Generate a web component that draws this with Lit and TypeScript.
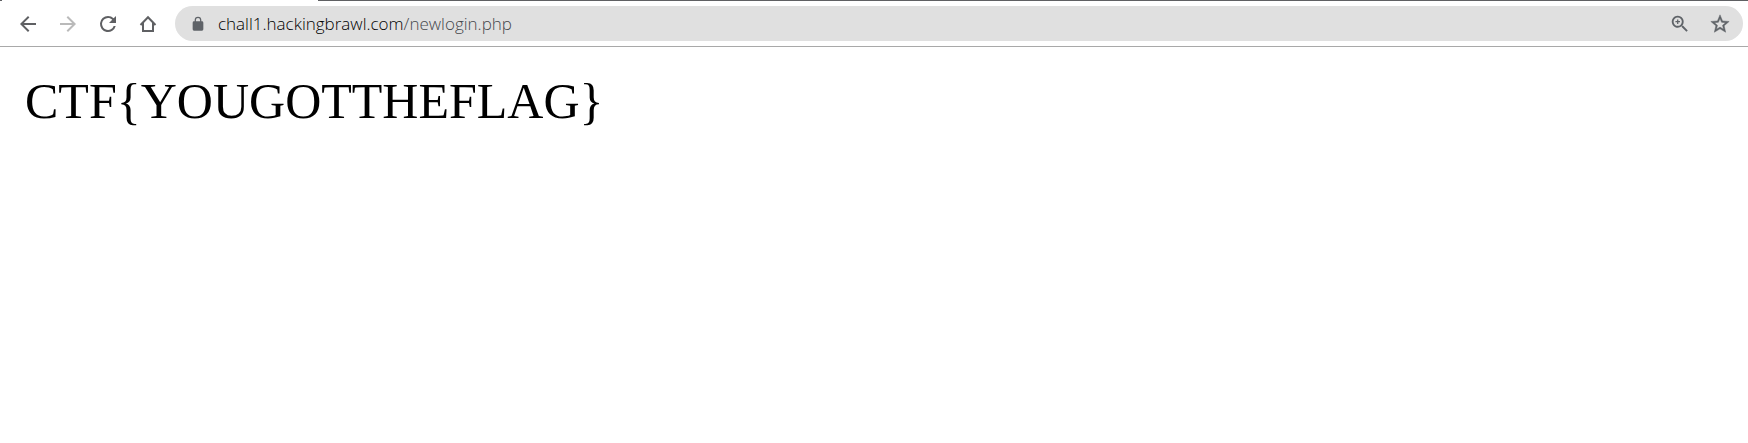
import { LitElement, html, css, svg } from "lit";
import { customElement, property } from "lit/decorators.js";

const icons = {
  back: svg`<path d="M20 11H7.83l5.59-5.59L12 4l-8 8 8 8 1.41-1.41L7.83 13H20v-2z"/>`,
  forward: svg`<path d="M4 11h12.17l-5.59-5.59L12 4l8 8-8 8-1.41-1.41L16.17 13H4v-2z"/>`,
  reload: svg`<path d="M17.65 6.35A7.96 7.96 0 0 0 12 4a8 8 0 1 0 7.73 10h-2.08A6 6 0 1 1 12 6c1.66 0 3.14.69 4.22 1.78L13 11h7V4l-2.35 2.35z"/>`,
  home: svg`<path fill="none" stroke="currentColor" stroke-width="2" stroke-linejoin="miter" d="M4.500 13 12 5.300l7.500 7.700M7 11v8h10v-8"/>`,
  lock: svg`<path d="M18 8h-1V6A5 5 0 0 0 7 6v2H6a2 2 0 0 0-2 2v10a2 2 0 0 0 2 2h12a2 2 0 0 0 2-2V10a2 2 0 0 0-2-2zM8.900 8V6a3.100 3.100 0 0 1 6.200 0v2z"/>`,
  zoom: svg`<path d="M15.500 14h-.79l-.28-.27A6.500 6.500 0 1 0 13.730 14.430l.27.28v.79l5 4.990L20.490 19l-4.990-5zm-6 0a4.500 4.500 0 1 1 0-9 4.500 4.500 0 0 1 0 9zM10.200 7H8.800v1.800H7v1.400h1.800V12h1.400v-1.800H12V8.800h-1.800z"/>`,
  star: svg`<path stroke="currentColor" stroke-width=".5" d="m22 9.240-7.190-.62L12 2 9.190 8.630 2 9.240l5.460 4.730L5.820 21 12 17.270 18.180 21l-1.630-7.030L22 9.240zM12 15.400l-3.760 2.270 1-4.280-3.320-2.880 4.380-.38L12 6.100l1.710 4.040 4.380.38-3.320 2.880 1 4.280L12 15.400z"/>`,
};

const glyph = (name: keyof typeof icons) =>
  html`<svg class="icon" viewBox="0 0 24 24" aria-hidden="true">${icons[name]}</svg>`;

@customElement("address-bar")
export class AddressBar extends LitElement {
  @property() host = "";
  @property() path = "";

  static styles = css`
    :host {
      display: block;
      flex: 1;
      min-width: 0;
    }
    .pill {
      display: flex;
      align-items: center;
      height: 35px;
      padding: 0 3px 0 15px;
      border-radius: 18px;
      background: #e0e0e0;
      color: #5f6368;
    }
    .icon {
      display: block;
      width: 22px;
      height: 22px;
      fill: currentColor;
    }
    .lock .icon {
      width: 16px;
      height: 16px;
    }
    button {
      display: grid;
      place-items: center;
      padding: 0;
      border: 0;
      background: none;
      color: inherit;
    }
    .action {
      width: 40px;
      height: 34px;
    }
    .field {
      display: grid;
      flex: 1;
      min-width: 0;
      margin-left: 12px;
      align-items: center;
      font: 300 17px/24px "Open Sans", "Noto Sans", sans-serif;
    }
    .field > * {
      grid-area: 1 / 1;
    }
    .shown {
      overflow: hidden;
      white-space: nowrap;
      pointer-events: none;
      color: #45484c;
    }
    .host {
      color: #000;
    }
    input {
      min-width: 0;
      padding: 0;
      border: 0;
      outline: 0;
      background: none;
      font: inherit;
      color: transparent;
    }
    input:focus {
      color: #000;
    }
    input:focus + .shown {
      visibility: hidden;
    }
  `;

  render() {
    return html`
      <div class="pill">
        <button class="lock" aria-label="View site information">${glyph("lock")}</button>
        <label class="field">
          <input type="text" aria-label="Address" .value=${this.host + this.path} />
          <span class="shown" aria-hidden="true"><span class="host">${this.host}</span>${this.path}</span>
        </label>
        <button class="action" aria-label="Zoom">${glyph("zoom")}</button>
        <button class="action" aria-label="Bookmark this page">${glyph("star")}</button>
      </div>
    `;
  }
}

@customElement("app-root")
export class AppRoot extends LitElement {
  static styles = css`
    :host {
      display: block;
      min-height: 100vh;
      background: #fff;
    }
    .tabs {
      display: flex;
      justify-content: space-between;
      height: 1px;
    }
    .edge {
      width: 2px;
      background: #5f6063;
    }
    .strip {
      flex: 1;
      margin-left: 316px;
      background: #5f6063;
    }
    .toolbar {
      display: flex;
      align-items: center;
      height: 45px;
      padding: 0 5px 0 8px;
      border-bottom: 1px solid #a9a9a9;
    }
    .nav {
      display: flex;
      margin-right: 7px;
    }
    .nav button {
      display: grid;
      place-items: center;
      width: 40px;
      height: 36px;
      padding: 0;
      border: 0;
      background: none;
      color: #5f6063;
    }
    .nav button:disabled {
      color: #bababa;
    }
    .icon {
      display: block;
      width: 24px;
      height: 24px;
      fill: currentColor;
    }
    main {
      padding: 25px;
      font: 50px/58px "Liberation Serif", "Times New Roman", serif;
      color: #000;
    }
  `;

  render() {
    return html`
      <div class="tabs"><span class="edge"></span><span class="strip"></span></div>
      <header class="toolbar">
        <nav class="nav">
          <button aria-label="Back">${glyph("back")}</button>
          <button aria-label="Forward" disabled>${glyph("forward")}</button>
          <button aria-label="Reload">${glyph("reload")}</button>
          <button aria-label="Home">${glyph("home")}</button>
        </nav>
        <address-bar host="chall1.hackingbrawl.com" path="/newlogin.php"></address-bar>
      </header>
      <main>CTF{YOUGOTTHEFLAG}</main>
    `;
  }
}
